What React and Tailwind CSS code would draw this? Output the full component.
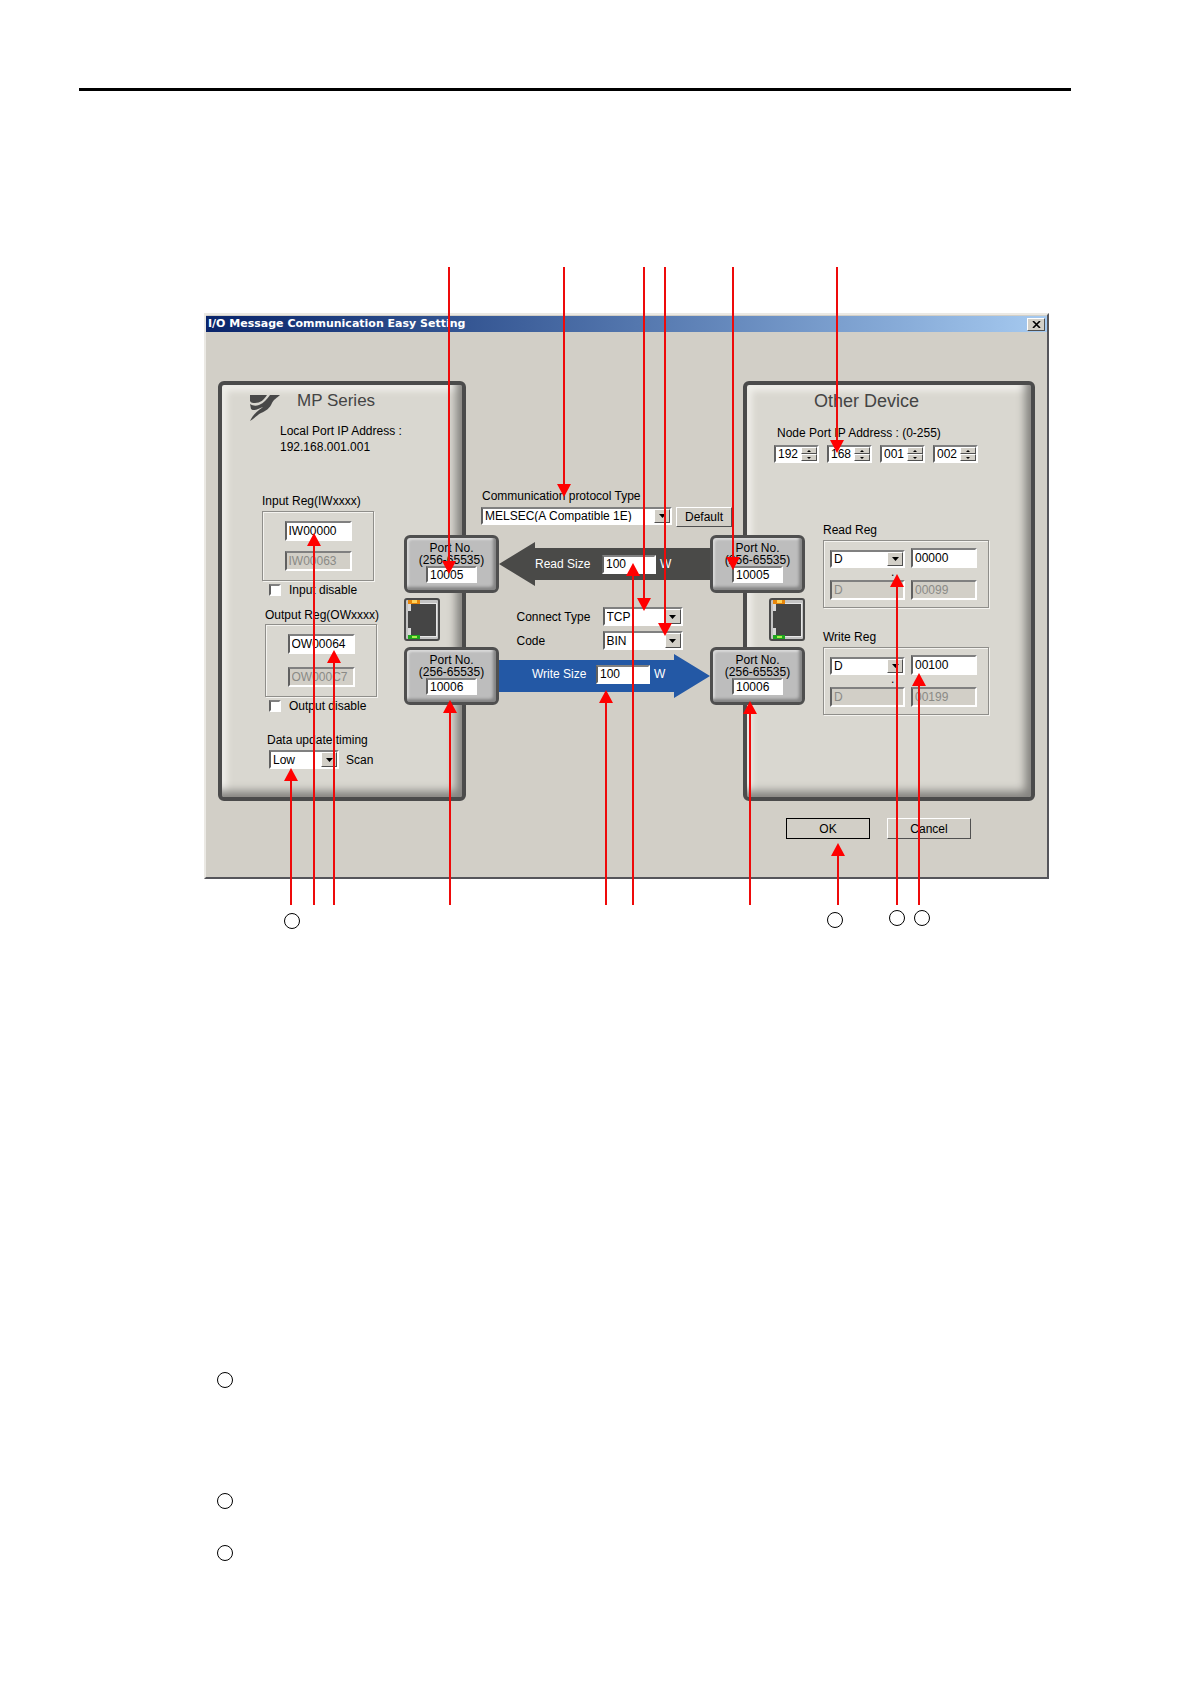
import { useState } from "react";

const SUNKEN =
  "border-2 border-t-[#808080] border-l-[#606060] border-r-white border-b-white";
const RAISED =
  "border border-t-white border-l-white border-r-[#505050] border-b-[#505050] bg-[#d2cfc7]";

/* --- Basic controls --- */
function TextBox({ label, value, disabled, className }) {
  return (
    <input
      type="text"
      aria-label={label}
      defaultValue={value}
      disabled={disabled}
      className={`${SUNKEN} px-0.5 leading-4 outline-none ${
        disabled ? "bg-[#d2cfc7] text-[#8a8a86]" : "bg-white text-black"
      } ${className}`}
    />
  );
}

function Select({ id, label, value, className }) {
  return (
    <div className={`relative ${className}`}>
      <select
        id={id}
        aria-label={label}
        defaultValue={value}
        className={`${SUNKEN} block w-full h-full appearance-none bg-white pl-0.5 leading-none outline-none`}
      >
        <option>{value}</option>
      </select>
      <span
        className={`${RAISED} pointer-events-none absolute top-0.5 right-0.5 bottom-0.5 w-4 flex items-center justify-center`}
      >
        <svg width="7" height="4" viewBox="0 0 7 4" aria-hidden="true">
          <path d="M0 0h7L3.5 4z" fill="#000" />
        </svg>
      </span>
    </div>
  );
}

function Spinner({ label, value }) {
  const [num, setNum] = useState(value);
  const step = (d) =>
    setNum(String(Math.min(255, Math.max(0, Number(num) + d))).padStart(3, "0"));
  return (
    <div className={`${SUNKEN} w-[45px] h-[18px] flex bg-white`}>
      <input
        type="text"
        aria-label={label}
        value={num}
        onChange={(e) => setNum(e.target.value)}
        className="w-[25px] pl-0.5 leading-none outline-none"
      />
      <div className="w-4 flex flex-col">
        <button
          type="button"
          aria-label={`${label} up`}
          onClick={() => step(1)}
          className={`${RAISED} flex-1 flex items-center justify-center`}
        >
          <svg width="4" height="2" viewBox="0 0 4 2">
            <path d="M0 2L2 0l2 2z" />
          </svg>
        </button>
        <button
          type="button"
          aria-label={`${label} down`}
          onClick={() => step(-1)}
          className={`${RAISED} flex-1 flex items-center justify-center`}
        >
          <svg width="4" height="2" viewBox="0 0 4 2">
            <path d="M0 0h4L2 2z" />
          </svg>
        </button>
      </div>
    </div>
  );
}

function CheckBox({ label }) {
  return (
    <label className="flex items-center gap-2 leading-4">
      <input
        type="checkbox"
        className={`${SUNKEN} size-3 appearance-none bg-white checked:bg-black`}
      />
      {label}
    </label>
  );
}

/* --- Panels --- */
function Panel({ className, children }) {
  return (
    <section
      className={`rounded-md border-4 border-[#4b4b4b] bg-[#d9d7d0] shadow-[inset_-7px_-7px_9px_-1px_#858480,inset_5px_6px_6px_#efeee9] ${className}`}
    >
      {children}
    </section>
  );
}

function GroupBox({ label, className, children }) {
  return (
    <div
      role="group"
      aria-label={label}
      className={`border border-[#8f8e8a] shadow-[inset_1px_1px_0_#f4f3ef,1px_1px_0_#f4f3ef] ${className}`}
    >
      {children}
    </div>
  );
}

function PortBox({ name, value }) {
  return (
    <div className="w-[95px] h-[58px] shrink-0 rounded-md border-3 border-[#4f4f4f] bg-[#bdbdbd] shadow-[inset_-3px_-3px_3px_#858585,inset_2px_2px_2px_#d8d8d8] flex flex-col items-center pt-1">
      <span className="leading-3">Port No.</span>
      <span className="leading-3">(256-65535)</span>
      <TextBox label={name} value={value} className="w-[51px] h-[17px]" />
    </div>
  );
}

function Jack() {
  return (
    <svg width="36" height="43" viewBox="0 0 36 43" className="shrink-0" aria-hidden="true">
      <rect x="1" y="1" width="34" height="41" rx="2" fill="#c4c4c4" stroke="#4b4b4b" strokeWidth="2" />
      <path d="M4 5h29v34H4V30h3V12H4z" fill="#e6e6e6" />
      <path d="M7 6h25v32H7v-7H4V12h3z" fill="#454545" />
      <path d="M4 6h3v7H4zM4 30h3v8H4z" fill="#d8d8d8" />
      <rect x="4" y="2" width="12" height="4" fill="#e8870c" />
      <rect x="8" y="2" width="5" height="3" fill="#ffd35a" />
      <rect x="4" y="37" width="12" height="4" fill="#1fa51f" />
      <rect x="8" y="38" width="5" height="2" fill="#a6f04a" />
    </svg>
  );
}

function MpPanel() {
  return (
    <Panel className="w-[248px] pb-7">
      <div className="flex items-start pt-1 pl-7">
        <svg width="31" height="27" viewBox="0 0 31 27" className="mt-1.5" aria-hidden="true">
          <g fill="#484848">
            <path d="M0 0h17C14 5 10 8 5 8 3 8 1 8 0 6z" />
            <path d="M0 9c3 2 6 2 9 1 5-2 8-6 11-10h10c-3 3-6 4-8 8-2 5-6 8-11 10-4 2-7 6-11 8 2-4 5-8 9-11 1-1 3-2 4-3-4 1-6 3-9 3-1 0-2 0-3-1z" />
          </g>
        </svg>
        <h2 className="ml-4 text-[17px] leading-6 text-[#444]">MP Series</h2>
      </div>
      <p className="mt-px pl-[58px] leading-4">
        Local Port IP Address :<br />
        192.168.001.001
      </p>

      <div className="mt-[38px] ml-10 leading-4">Input Reg(IWxxxx)</div>
      <GroupBox
        label="Input Reg"
        className="mt-0.5 ml-10 w-[112px] h-[70px] py-[9px] flex flex-col items-center justify-between"
      >
        <TextBox label="Input start" value="IW00000" className="w-[67px] h-5" />
        <TextBox label="Input end" value="IW00063" disabled className="w-[67px] h-5" />
      </GroupBox>
      <div className="mt-px ml-[47px]">
        <CheckBox label="Input disable" />
      </div>

      <div className="mt-[9px] ml-[43px] leading-4">Output Reg(OWxxxx)</div>
      <GroupBox
        label="Output Reg"
        className="mt-px ml-[43px] w-[112px] h-[73px] py-[9px] flex flex-col items-center justify-between"
      >
        <TextBox label="Output start" value="OW00064" className="w-[67px] h-5" />
        <TextBox label="Output end" value="OW000C7" disabled className="w-[67px] h-5" />
      </GroupBox>
      <div className="mt-px ml-[47px]">
        <CheckBox label="Output disable" />
      </div>

      <label htmlFor="timing" className="block mt-[18px] ml-[45px] leading-4">
        Data update timing
      </label>
      <div className="mt-0.5 ml-[47px] flex items-center gap-[7px]">
        <Select id="timing" label="Data update timing" value="Low" className="w-[70px] h-[19px]" />
        <span>Scan</span>
      </div>
    </Panel>
  );
}

function RegGroup({ label, start, end }) {
  return (
    <>
      <div className="leading-4">{label}</div>
      <GroupBox label={label} className="mt-0.5 w-[166px] h-[68px] pt-[7px] pl-1.5">
        <div className="flex items-end gap-1.5">
          <Select label={`${label} type`} value="D" className="w-[75px] h-[18px]" />
          <TextBox label={`${label} start`} value={start} className="w-[66px] h-5" />
        </div>
        <div className="h-3 pl-[61px] leading-[8px]">.</div>
        <div className="flex gap-1.5">
          <TextBox label={`${label} end type`} value="D" disabled className="w-[75px] h-5" />
          <TextBox label={`${label} end`} value={end} disabled className="w-[66px] h-5" />
        </div>
      </GroupBox>
    </>
  );
}

function DevicePanel() {
  return (
    <Panel className="w-[292px]">
      <h2 className="pt-1 pl-[67px] text-[18px] leading-6 text-[#444]">Other Device</h2>
      <div className="mt-3 pl-[30px] leading-4">Node Port IP Address : (0-255)</div>
      <div className="mt-1 pl-[27px] flex gap-2">
        <Spinner label="Address part 1" value="192" />
        <Spinner label="Address part 2" value="168" />
        <Spinner label="Address part 3" value="001" />
        <Spinner label="Address part 4" value="002" />
      </div>
      <div className="mt-[59px] pl-[76px]">
        <RegGroup label="Read Reg" start="00000" end="00099" />
      </div>
      <div className="mt-[21px] pl-[76px]">
        <RegGroup label="Write Reg" start="00100" end="00199" />
      </div>
    </Panel>
  );
}

/* --- Links between the two panels --- */
function LinkColumn() {
  return (
    <div className="relative z-10 flex-1 mt-[107px] -mx-[62px]">
      <label htmlFor="protocol" className="block ml-[78px] leading-4">
        Communication protocol Type
      </label>
      <div className="mt-[3px] ml-[77px] flex gap-1">
        <Select
          id="protocol"
          label="Communication protocol Type"
          value="MELSEC(A Compatible 1E)"
          className="w-[191px] h-[18px]"
        />
        <button type="button" className={`${RAISED} w-14 h-5 leading-4`}>
          Default
        </button>
      </div>

      <div className="mt-2 flex items-center">
        <PortBox name="Local read port" value="10005" />
        <div className="flex-1 h-11 pl-9 flex items-center bg-[#4a4a48] text-white [clip-path:polygon(0_50%,36px_0,36px_6px,100%_6px,100%_38px,36px_38px,36px_100%)]">
          <label htmlFor="read-size" className="w-[67px]">Read Size</label>
          <input
            id="read-size"
            type="text"
            defaultValue="100"
            className={`${SUNKEN} w-[54px] h-[19px] mr-1 px-0.5 bg-white text-black leading-none`}
          />
          W
        </div>
        <PortBox name="Node read port" value="10005" />
      </div>

      <div className="mt-[5px] h-[43px] flex justify-between">
        <Jack />
        <div className="mt-[9px] -ml-[10px] grid grid-cols-[86px_80px] auto-rows-[19px] gap-y-[5px] items-center">
          <label htmlFor="connect">Connect Type</label>
          <Select id="connect" label="Connect Type" value="TCP" className="h-[19px]" />
          <label htmlFor="code">Code</label>
          <Select id="code" label="Code" value="BIN" className="h-[19px]" />
        </div>
        <Jack />
      </div>

      <div className="mt-1.5 flex items-center">
        <PortBox name="Local write port" value="10006" />
        <div className="flex-1 h-11 pl-[33px] pb-1 flex items-center bg-[#2358a5] text-white [clip-path:polygon(0_6px,calc(100%-36px)_6px,calc(100%-36px)_0,100%_50%,calc(100%-36px)_100%,calc(100%-36px)_38px,0_38px)]">
          <label htmlFor="write-size" className="w-16">Write Size</label>
          <input
            id="write-size"
            type="text"
            defaultValue="100"
            className={`${SUNKEN} w-[54px] h-[19px] mr-1 px-0.5 bg-white text-black leading-none`}
          />
          W
        </div>
        <PortBox name="Node write port" value="10006" />
      </div>
    </div>
  );
}

function Dialog() {
  return (
    <div className="border-2 border-t-[#ebe9e4] border-l-[#ebe9e4] border-r-[#55555a] border-b-[#55555a] bg-[#d2cfc7]">
      <header className="mt-px h-4 px-0.5 flex items-center justify-between bg-linear-to-r from-[#0a246a] to-[#a6caf0]">
        <h1 className="font-['DejaVu_Sans',sans-serif] text-[11px] leading-4 font-bold text-white">
          I/O Message Communication Easy Setting
        </h1>
        <button
          type="button"
          aria-label="Close"
          className={`${RAISED} w-[18px] h-[13px] flex items-center justify-center`}
        >
          <svg width="9" height="7" viewBox="0 0 9 7">
            <path d="M1 0l7 7M8 0L1 7" stroke="#000" strokeWidth="1.6" />
          </svg>
        </button>
      </header>
      <div className="pt-[49px] px-3 flex">
        <MpPanel />
        <LinkColumn />
        <DevicePanel />
      </div>
      <footer className="mt-[17px] pr-[76px] pb-[38px] flex justify-end gap-[17px]">
        <button type="button" className={`${RAISED} w-[84px] h-[21px] outline outline-black -outline-offset-1`}>
          OK
        </button>
        <button type="button" className={`${RAISED} w-[84px] h-[21px]`}>
          Cancel
        </button>
      </footer>
    </div>
  );
}

/* --- Callouts: x and tip y, measured from the figure's corner --- */
const DOWN = [
  [245, 307],
  [360, 230],
  [440, 344],
  [461, 369],
  [529, 303],
  [633, 186],
];
const UP = [
  [87, 501],
  [110, 266],
  [130, 383],
  [246, 433],
  [402, 423],
  [429, 296],
  [546, 434],
  [634, 576],
  [693, 307],
  [715, 406],
];
const MARKS = [
  [88, 654],
  [631, 653],
  [693, 651],
  [718, 651],
];

function Callouts() {
  return (
    <svg
      width="845"
      height="664"
      viewBox="0 0 845 664"
      className="pointer-events-none absolute top-0 left-0 z-20"
      aria-hidden="true"
    >
      {DOWN.map(([x, y]) => (
        <g key={x} fill="#f00">
          <rect x={x - 1} y="0" width="2" height={y - 12} fill="#ee0a0a" />
          <path d={`M${x - 7} ${y - 13}h14l-7 13z`} />
        </g>
      ))}
      {UP.map(([x, y]) => (
        <g key={x} fill="#f00">
          <rect x={x - 1} y={y + 12} width="2" height={626 - y} fill="#ee0a0a" />
          <path d={`M${x - 7} ${y + 13}h14l-7-13z`} />
        </g>
      ))}
      {MARKS.map(([x, y]) => (
        <circle key={x} cx={x} cy={y} r="7.5" fill="#fff" stroke="#000" />
      ))}
    </svg>
  );
}

function Mark() {
  return <span className="block size-4 rounded-full border border-black" />;
}

export default function App() {
  return (
    <div className="min-h-screen pt-[88px] bg-white text-black text-[12px] leading-4 font-['Liberation_Sans',Arial,sans-serif]">
      <hr className="ml-[79px] mr-[119px] border-0 h-[3px] bg-black" />
      <main className="mt-44 ml-[204px] mr-[141px]">
        <figure className="relative pt-[46px]">
          <Dialog />
          <Callouts />
        </figure>
        <ul className="mt-[493px] ml-[13px]">
          <li className="mb-[105px]"><Mark /></li>
          <li className="mb-9"><Mark /></li>
          <li><Mark /></li>
        </ul>
      </main>
    </div>
  );
}
